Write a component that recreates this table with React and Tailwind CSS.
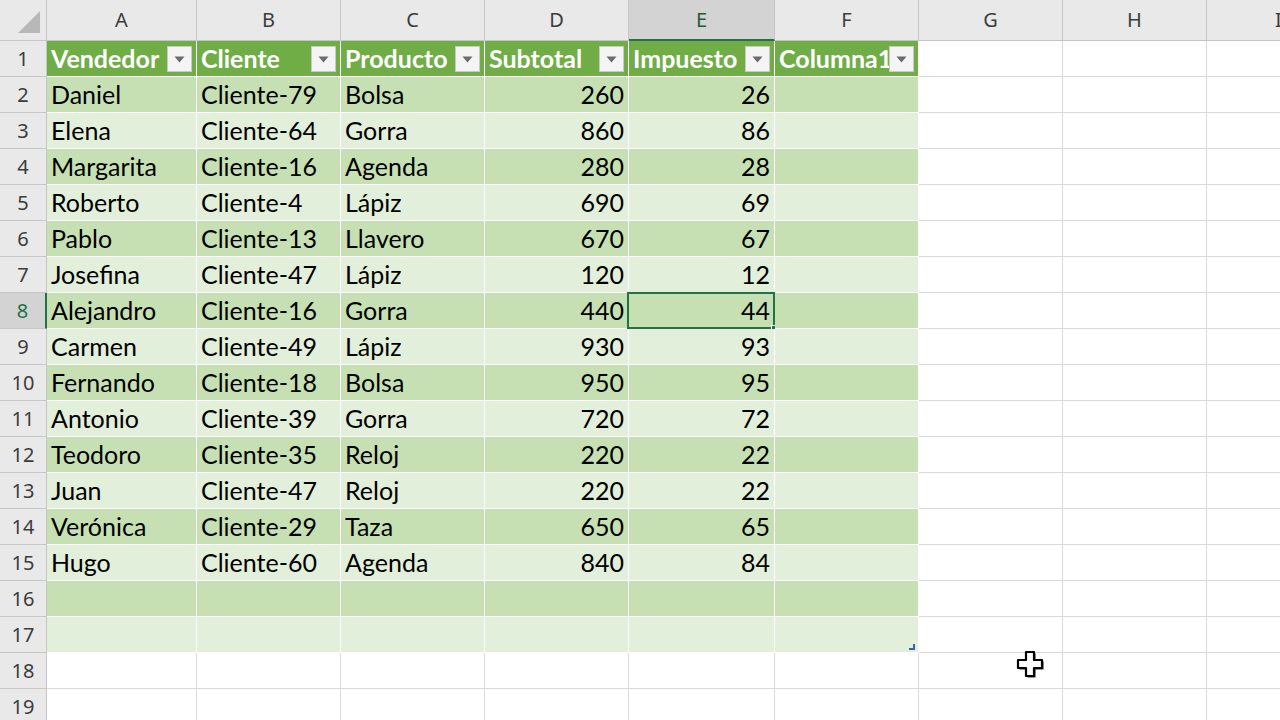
import React from 'react';

const rows = [
  ['Daniel', 'Cliente-79', 'Bolsa', 260, 26],
  ['Elena', 'Cliente-64', 'Gorra', 860, 86],
  ['Margarita', 'Cliente-16', 'Agenda', 280, 28],
  ['Roberto', 'Cliente-4', 'Lápiz', 690, 69],
  ['Pablo', 'Cliente-13', 'Llavero', 670, 67],
  ['Josefina', 'Cliente-47', 'Lápiz', 120, 12],
  ['Alejandro', 'Cliente-16', 'Gorra', 440, 44],
  ['Carmen', 'Cliente-49', 'Lápiz', 930, 93],
  ['Fernando', 'Cliente-18', 'Bolsa', 950, 95],
  ['Antonio', 'Cliente-39', 'Gorra', 720, 72],
  ['Teodoro', 'Cliente-35', 'Reloj', 220, 22],
  ['Juan', 'Cliente-47', 'Reloj', 220, 22],
  ['Verónica', 'Cliente-29', 'Taza', 650, 65],
  ['Hugo', 'Cliente-60', 'Agenda', 840, 84],
  ['', '', '', '', ''],
  ['', '', '', '', ''],
];

const headers = ['Vendedor', 'Cliente', 'Producto', 'Subtotal', 'Impuesto', 'Columna1'];
const letters = ['A', 'B', 'C', 'D', 'E', 'F', 'G', 'H', 'I'];

const cellFont = { fontFamily: 'Lato, "Open Sans", sans-serif' };
const headFont = { fontFamily: '"Noto Sans", "Open Sans", sans-serif' };

function FilterButton() {
  return (
    <div className="absolute right-[4px] top-[5px] w-[25px] h-[26px] bg-[#f4f4f4] border border-[#c9c9c9] flex items-center justify-center">
      <svg width="11" height="7" viewBox="0 0 11 7">
        <path d="M0.5 0.5 L10.5 0.5 L5.5 6.5 Z" fill="#6b6b6b" />
      </svg>
    </div>
  );
}

function RowHeader({ n, active }) {
  return (
    <div
      style={headFont}
      className={
        'h-[36px] flex items-center justify-center text-[20px] border-b border-[#c6c6c6] ' +
        (active
          ? 'bg-[#d3d3d3] text-[#217346] border-r-2 border-r-[#217346]'
          : 'bg-[#e9e9e9] text-[#3c3c3c] border-r border-r-[#c6c6c6]')
      }
    >
      {n}
    </div>
  );
}

function EmptyCells() {
  return (
    <>
      <div className="h-[36px] border-r border-b border-[#d9d9d9]" />
      <div className="h-[36px] border-r border-b border-[#d9d9d9]" />
      <div className="h-[36px] border-b border-[#d9d9d9]" />
    </>
  );
}

export default function App() {
  return (
    <div className="w-[1280px] h-[720px] overflow-hidden bg-white">
      <div className="grid w-max grid-cols-[47px_150px_144px_144px_144px_146px_144px_144px_144px_144px]">
        {/* esquina */}
        <div className="h-[41px] bg-[#e9e9e9] border-r border-b border-[#c6c6c6] relative">
          <svg className="absolute right-[6px] bottom-[7px]" width="22" height="22" viewBox="0 0 22 22">
            <path d="M22 0 L22 22 L0 22 Z" fill="#b8b8b8" />
          </svg>
        </div>
        {letters.map((l) => (
          <div
            key={l}
            style={headFont}
            className={
              'h-[41px] flex items-center justify-center text-[20px] border-r border-[#c6c6c6] ' +
              (l === 'E'
                ? 'bg-[#d3d3d3] text-[#1f5c38] border-b-2 border-b-[#217346]'
                : 'bg-[#e9e9e9] text-[#3c3c3c] border-b border-b-[#c6c6c6]')
            }
          >
            {l}
          </div>
        ))}

        {/* fila 1: encabezado de tabla */}
        <RowHeader n={1} />
        {headers.map((h) => (
          <div
            key={h}
            style={cellFont}
            className="h-[36px] relative bg-[#70ad47] border-r border-b border-white text-white font-bold text-[25px] pl-[4px] flex items-center overflow-hidden whitespace-nowrap"
          >
            {h}
            <FilterButton />
          </div>
        ))}
        <EmptyCells />

        {rows.map((r, i) => {
          const n = i + 2;
          const band = i % 2 === 0 ? 'bg-[#c6e0b4]' : 'bg-[#e2efda]';
          return (
            <React.Fragment key={n}>
              <RowHeader n={n} active={n === 8} />
              {[0, 1, 2, 3, 4, 5].map((c) => {
                const v = c < 5 ? r[c] : '';
                const num = c === 3 || c === 4;
                const selected = n === 8 && c === 4;
                return (
                  <div
                    key={c}
                    style={cellFont}
                    className={
                      'h-[36px] relative border-r border-b border-white text-[25px] text-black flex items-center whitespace-nowrap ' +
                      band +
                      (num ? ' justify-end pr-[4px]' : ' pl-[4px]')
                    }
                  >
                    {v}
                    {selected && (
                      <>
                        <div className="absolute -left-[2px] -top-[1px] -right-[1px] -bottom-[1px] border-2 border-[#217346]" />
                        <div className="absolute -right-[5px] -bottom-[5px] w-[8px] h-[8px] bg-[#217346] border border-white" />
                      </>
                    )}
                    {n === 17 && c === 5 && (
                      <svg className="absolute right-[3px] bottom-[2px]" width="6" height="6" viewBox="0 0 6 6">
                        <path d="M4 0 L6 0 L6 6 L0 6 L0 4 L4 4 Z" fill="#3f5fb0" />
                      </svg>
                    )}
                  </div>
                );
              })}
              <EmptyCells />
            </React.Fragment>
          );
        })}

        {[18, 19].map((n) => (
          <React.Fragment key={n}>
            <RowHeader n={n} />
            {[0, 1, 2, 3, 4, 5, 6, 7].map((c) => (
              <div key={c} className="h-[36px] relative border-r border-b border-[#d9d9d9]">
                {n === 18 && c === 6 && (
                  <svg className="absolute left-[96px] top-[-4px]" width="30" height="30" viewBox="0 0 30 30">
                    <path d="M11 3 H19 V11 H27 V19 H19 V27 H11 V19 H3 V11 H11 Z" fill="#222" transform="translate(1.5 1.5)" />
                    <path d="M11 3 H19 V11 H27 V19 H19 V27 H11 V19 H3 V11 H11 Z" fill="#fff" stroke="#000" strokeWidth="2.2" strokeLinejoin="round" />
                  </svg>
                )}
              </div>
            ))}
            <div className="h-[36px] border-b border-[#d9d9d9]" />
          </React.Fragment>
        ))}
      </div>
    </div>
  );
}
